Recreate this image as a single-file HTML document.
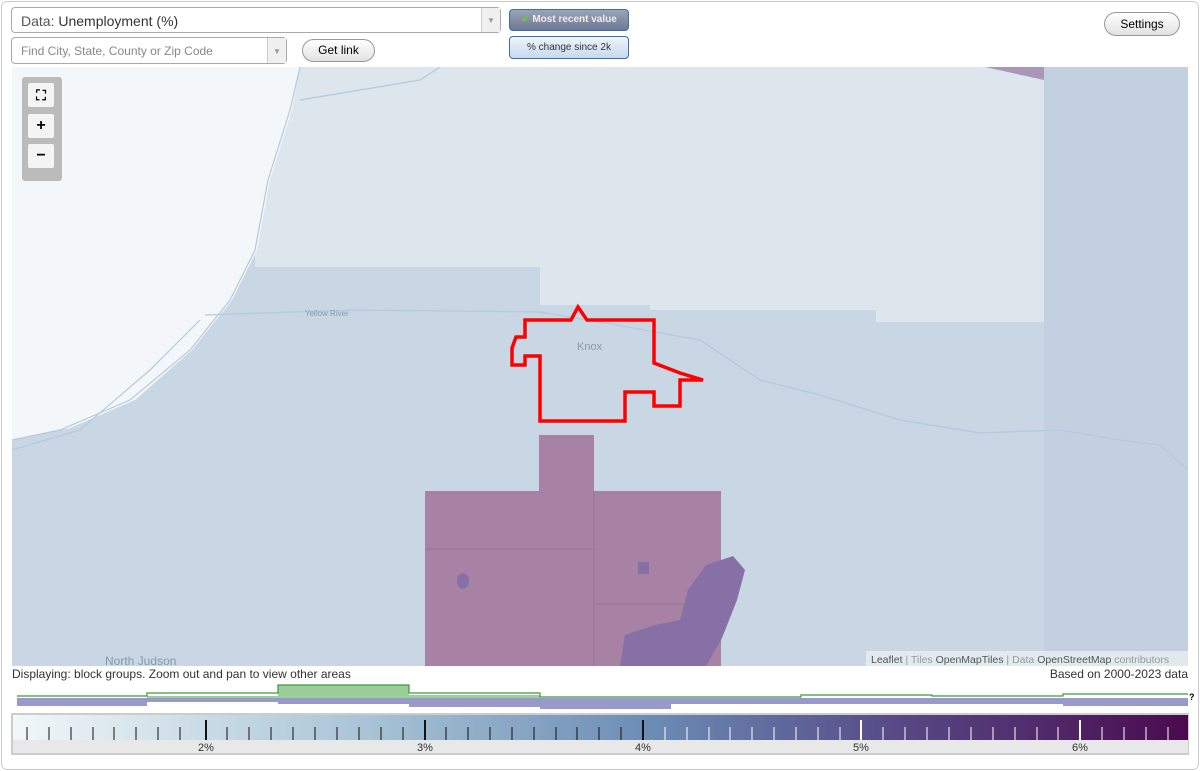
<!DOCTYPE html>
<html><head><meta charset="utf-8"><style>
body{margin:0;width:1200px;height:771px;background:#fff;font-family:"Liberation Sans",sans-serif;position:relative;overflow:hidden}
.frame{position:absolute;left:1px;top:1px;width:1196px;height:767px;border:1px solid #ccc;border-radius:6px}
.sel{position:absolute;background:#fff;border:1px solid #aaa;border-radius:4px;box-sizing:border-box}
.arr{position:absolute;right:0;top:0;bottom:0;width:18px;border-left:1px solid #ccc;background:#f0f0f0;color:#999;font-size:8px;text-align:center}
.btn{position:absolute;border:1px solid #999;border-radius:12px;background:linear-gradient(#fff,#e2e2e2);font-size:12px;text-align:center;box-sizing:border-box}
.tog{position:absolute;border:1px solid #3a6fa8;border-radius:4px;font-size:10px;text-align:center;box-sizing:border-box}
.zc{position:absolute;left:22px;top:77px;width:40px;height:104px;background:#bbb;border-radius:3px}
.zb{position:absolute;left:6px;width:26px;height:24px;background:#f4f4f4;border-radius:2px;font-weight:bold;text-align:center;line-height:24px;font-size:16px}
</style></head><body>
<div class="frame"></div>
<div class="sel" style="left:11px;top:7px;width:490px;height:26px"><span style="position:absolute;left:9px;top:5px;font-size:14px;color:#555">Data: <span style="color:#333">Unemployment (%)</span></span><div class="arr" style="line-height:26px">▼</div></div>
<div class="sel" style="left:11px;top:37px;width:276px;height:27px"><span style="position:absolute;left:9px;top:6px;font-size:12px;color:#888">Find City, State, County or Zip Code</span><div class="arr" style="line-height:27px">▼</div></div>
<div class="btn" style="left:302px;top:39px;width:73px;height:23px;line-height:21px">Get link</div>
<div class="tog" style="left:509px;top:9px;width:120px;height:22px;background:linear-gradient(#9aa3b8,#6e7894);color:#eee;font-weight:bold;line-height:20px"><span style="color:#6c3">✔</span> Most recent value</div>
<div class="tog" style="left:509px;top:36px;width:120px;height:23px;background:linear-gradient(#eef4fb,#c7d9ef);color:#333;line-height:21px">% change since 2k</div>
<div class="btn" style="left:1104px;top:12px;width:76px;height:24px;line-height:22px">Settings</div>

<svg style="position:absolute;left:12px;top:67px" width="1176" height="599" viewBox="12 67 1176 599">
<rect x="12" y="67" width="1176" height="599" fill="#c8d7e3"/>
<rect x="1044" y="67" width="144" height="599" fill="#c3d0df"/>
<polygon points="255,67 1044,67 1044,322 876,322 876,310 650,310 650,305 540,305 540,267 255,267" fill="#dce6ec"/>
<polygon points="12,67 300,67 292,110 270,180 257,250 232,300 192,350 135,400 70,428 12,440" fill="#f4f7f9"/>
<polygon points="985,67 1044,67 1044,80" fill="#a996b8"/>
<path d="M300,67 L290,110 L268,180 L255,250 L230,300 L190,350 L130,400 L60,430 L12,440 M300,100 L360,90 L420,80 L440,67 M205,315 L350,310 L540,312 L600,322 L700,340 L760,380 L820,395 L900,420 L980,433 L1060,430 L1120,440 L1160,445 L1188,470 M12,450 L80,430 L150,370 L200,320" stroke="#b3cade" stroke-width="1.2" fill="none"/>
<rect x="539" y="435" width="55" height="56" fill="#a782a5"/>
<rect x="425" y="491" width="296" height="175" fill="#a782a5"/>
<path d="M425,549 H594 M594,491 V666 M594,604 H705" stroke="#977798" stroke-width="1"/>
<polygon points="706,565 733,556 745,570 737,600 722,638 706,666 620,666 625,635 655,625 680,620 688,590" fill="#8670a5"/>
<rect x="638" y="562" width="11" height="12" fill="#8670a5"/>
<ellipse cx="463" cy="581" rx="6" ry="8" fill="#8670a5"/>
<polygon points="525,320 540,320 571,320 578,307 587,320 652,320 654,320 654,363 680,373 703,380 680,380 680,406 654,406 654,392 625,392 625,421 540,421 540,356 525,356 525,365 512,365 512,348 516,337 525,337" fill="none" stroke="#f00" stroke-width="3.5"/>
<text x="577" y="350" font-size="11" fill="#8899aa">Knox</text>
<text x="305" y="316" font-size="8" fill="#8899aa">Yellow River</text>
<text x="105" y="665" font-size="12" fill="#8899aa">North Judson</text>
<rect x="866" y="651" width="322" height="15" fill="#e6edf2" opacity=".85"/>
<text x="871" y="663" font-size="10.5" fill="#999"><tspan fill="#555">Leaflet</tspan> | Tiles <tspan fill="#555">OpenMapTiles</tspan> | Data <tspan fill="#555">OpenStreetMap</tspan> contributors</text>
</svg>
<div class="zc"><div class="zb" style="top:6px;font-size:14px">⛶</div><div class="zb" style="top:37px">+</div><div class="zb" style="top:67px">−</div></div>
<div style="position:absolute;left:12px;top:667px;font-size:12px;color:#333">Displaying: block groups. Zoom out and pan to view other areas</div>
<div style="position:absolute;right:12px;top:667px;font-size:12px;color:#333">Based on 2000-2023 data</div>

<svg style="position:absolute;left:0;top:680px" width="1200" height="35">
<polygon points="17,18 147,18 147,16 278,16 278,5 409,5 409,15 540,15 540,20 1188,20 1188,18 17,18" fill="#9cce9c"/>
<path d="M17,16 H147 V13 H278 V5 H409 V13 H540 V17 H801 V15 H932 V16 H1063 V14 H1188" stroke="#3a9a3a" stroke-width="1.2" fill="none"/>
<polygon points="17,18 1188,18 1188,26 1063,26 1063,24 671,24 671,29 540,29 540,27 409,27 409,24 278,24 278,22 147,22 147,26 17,26" fill="#9a9aca"/>
<text x="1189" y="20" font-size="9" font-weight="bold">?</text>
</svg>
<div style="position:absolute;left:11px;top:713px;width:1178px;height:42px;border:2px solid #ccc;box-sizing:border-box"></div>
<svg style="position:absolute;left:13px;top:715px" width="1175" height="38">
<defs><linearGradient id="g"><stop offset="0" stop-color="#f2f7f9"/><stop offset=".3" stop-color="#a8c4d6"/><stop offset=".55" stop-color="#6a8ab3"/><stop offset=".75" stop-color="#574a86"/><stop offset="1" stop-color="#4a0a4e"/></linearGradient></defs>
<rect width="1175" height="25" fill="url(#g)"/>
<rect y="25" width="1175" height="13" fill="#e8e8e8"/>
<g font-size="11" fill="#333" text-anchor="middle"><text x="193" y="36">2%</text><text x="412" y="36">3%</text><text x="630" y="36">4%</text><text x="848" y="36">5%</text><text x="1067" y="36">6%</text></g>
<g stroke-width="1">
<path d="M14,12V25M36,12V25M58,12V25M80,12V25M101,12V25M123,12V25M145,12V25M167,12V25M214,12V25M236,12V25M258,12V25M280,12V25M302,12V25M324,12V25M346,12V25M368,12V25M390,12V25M433,12V25M455,12V25M477,12V25M499,12V25M521,12V25M543,12V25M564,12V25M586,12V25M608,12V25" stroke="#111"/>
<path d="M193,5V25M412,5V25M630,5V25" stroke="#111" stroke-width="2"/>
<path d="M652,12V25M674,12V25M696,12V25M717,12V25M739,12V25M761,12V25M783,12V25M805,12V25M827,12V25M870,12V25M892,12V25M914,12V25M936,12V25M958,12V25M980,12V25M1002,12V25M1024,12V25M1045,12V25M1089,12V25M1111,12V25M1133,12V25M1155,12V25" stroke="#fff"/>
<path d="M848,5V25M1067,5V25" stroke="#fff" stroke-width="2"/>
</g>
</svg>
</body></html>
